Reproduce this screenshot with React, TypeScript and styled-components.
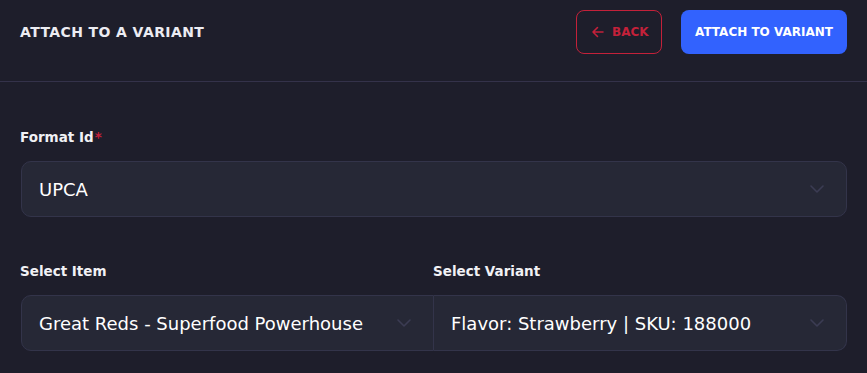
import React from 'react'
import styled, { createGlobalStyle } from 'styled-components'

const GlobalStyle = createGlobalStyle`
    html, body {
        margin: 0;
        padding: 0;
        background-color: #1e1e2b;
    }
    body {
        font-family: "DejaVu Sans", "Noto Sans", sans-serif;
    }
`

const Page = styled.div`
    width: 867px;
    height: 373px;
    background-color: #1e1e2b;
    color: #ffffff;
    overflow: hidden;
`

const Header = styled.div`
    height: 82px;
    box-sizing: border-box;
    padding: 0 20px;
    display: flex;
    align-items: center;
    justify-content: space-between;
    border-bottom: 1px solid #34324a;
`

const Title = styled.h1`
    margin: 0;
    font-size: 14px;
    font-weight: 700;
    letter-spacing: 0.4px;
    color: #ececf2;
    text-transform: uppercase;
    margin-top: -18px;
`

const Actions = styled.div`
    display: flex;
    gap: 19px;
    margin-top: -18px;
`

const Button = styled.button<{ $variant: 'outline' | 'primary' }>`
    height: 44px;
    box-sizing: border-box;
    border-radius: 8px;
    font-family: inherit;
    font-size: 12px;
    font-weight: 700;
    text-transform: uppercase;
    display: flex;
    align-items: center;
    gap: 7px;
    cursor: pointer;
    ${({ $variant }) =>
        $variant === 'outline'
            ? `
        background: transparent;
        border: 1px solid #c4213a;
        color: #c4213a;
        padding: 0 12px 0 14px;
        width: 86px;
    `
            : `
        background: #3262fe;
        border: none;
        color: #ffffff;
        padding: 0 8px;
        width: 166px;
        justify-content: center;
    `}
`

const Form = styled.div`
    padding: 46px 20px 0 21px;
    display: flex;
    flex-direction: column;
    gap: 45px;
`

const Field = styled.div`
    display: flex;
    flex-direction: column;
    flex: 1;
`

const Label = styled.label`
    font-size: 13.5px;
    font-weight: 700;
    color: #f1f1f5;
    margin-left: -1px;
    margin-bottom: 15px;
    line-height: 18px;
`

const Required = styled.span`
    color: #c4213a;
    margin-left: 1px;
`

const Row = styled.div`
    display: flex;
`

const Select = styled.div<{ $join?: 'left' | 'right' }>`
    height: 56px;
    box-sizing: border-box;
    background: #262836;
    border: 1px solid #33344a;
    border-radius: ${({ $join }) =>
        $join === 'left' ? '10px 0 0 10px' : $join === 'right' ? '0 10px 10px 0' : '10px'};
    ${({ $join }) => ($join === 'right' ? 'border-left: none;' : '')}
    display: flex;
    align-items: center;
    justify-content: space-between;
    padding: 0 22px 0 17px;
    font-size: 18px;
    color: #ffffff;
`

const Chevron = () => (
    <svg width="14" height="8" viewBox="0 0 14 8" fill="none">
        <path d="M1 1l6 6 6-6" stroke="#3b3c53" strokeWidth="1.6" strokeLinecap="round" strokeLinejoin="round" />
    </svg>
)

const ArrowLeft = () => (
    <svg width="14" height="14" viewBox="0 0 14 14" fill="none">
        <path d="M12 7H2M6.5 2.5L2 7l4.5 4.5" stroke="#c4213a" strokeWidth="1.6" strokeLinecap="round" strokeLinejoin="round" />
    </svg>
)

export default function App() {
    return (
        <Page>
            <GlobalStyle />
            <Header>
                <Title>Attach to a variant</Title>
                <Actions>
                    <Button $variant="outline"><ArrowLeft />Back</Button>
                    <Button $variant="primary">Attach to variant</Button>
                </Actions>
            </Header>
            <Form>
                <Field>
                    <Label>Format Id<Required>*</Required></Label>
                    <Select>
                        <span>UPCA</span>
                        <Chevron />
                    </Select>
                </Field>
                <Row>
                    <Field>
                        <Label>Select Item</Label>
                        <Select $join="left">
                            <span>Great Reds - Superfood Powerhouse</span>
                            <Chevron />
                        </Select>
                    </Field>
                    <Field>
                        <Label>Select Variant</Label>
                        <Select $join="right">
                            <span>Flavor: Strawberry | SKU: 188000</span>
                            <Chevron />
                        </Select>
                    </Field>
                </Row>
            </Form>
        </Page>
    )
}
